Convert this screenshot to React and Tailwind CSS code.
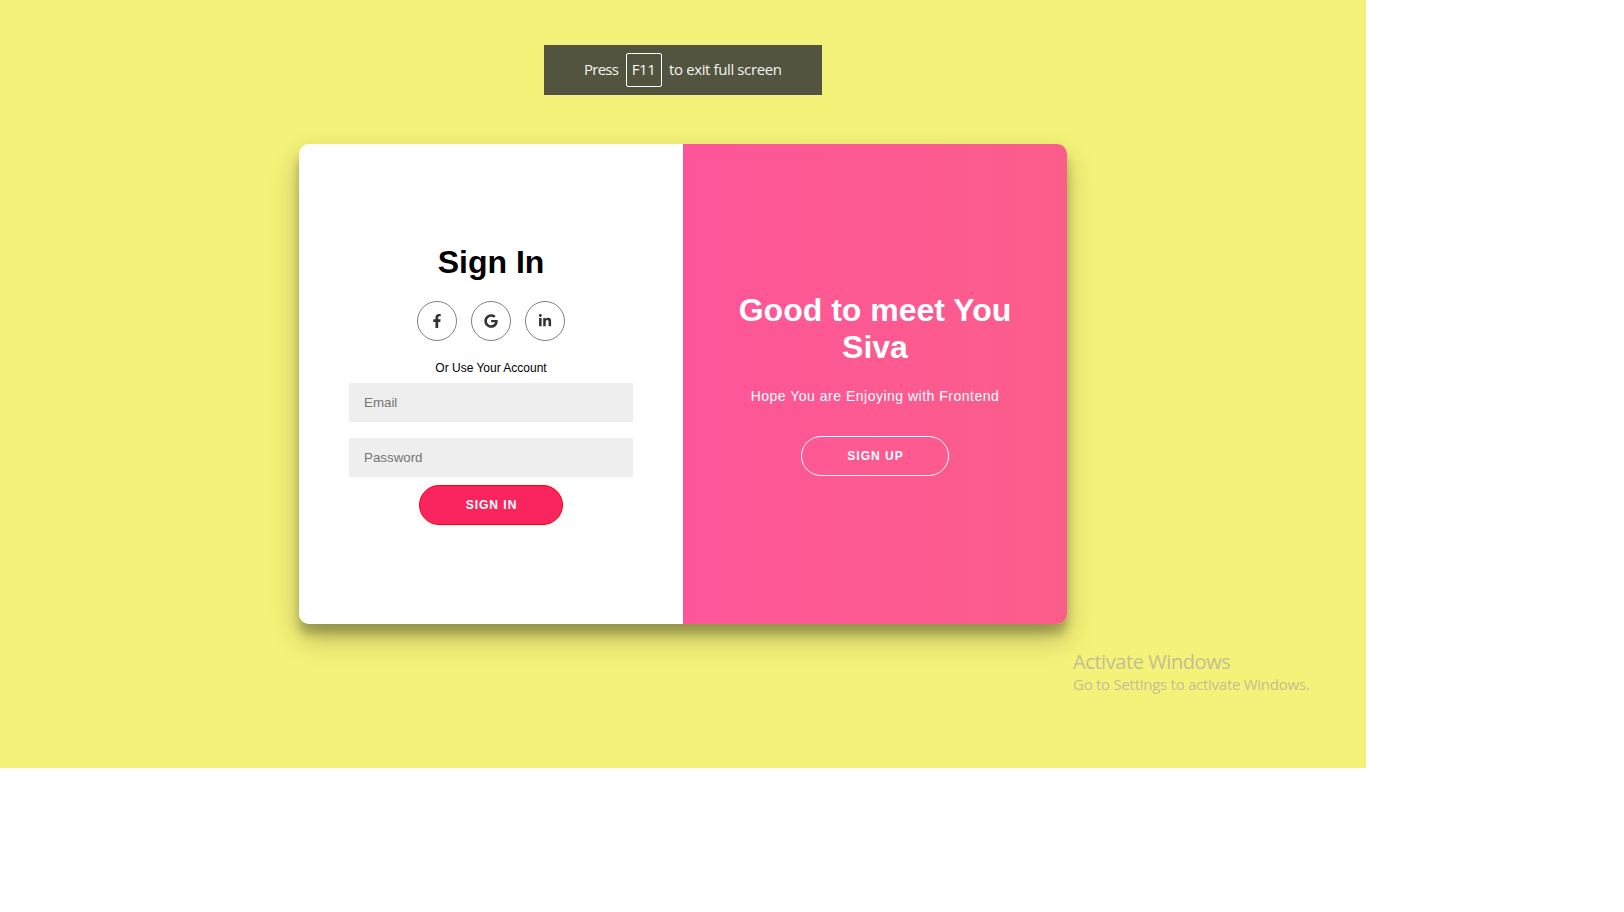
import { FaFacebookF, FaGoogle, FaLinkedinIn } from "react-icons/fa";

const socials = [
  { label: "Facebook", Icon: FaFacebookF },
  { label: "Google", Icon: FaGoogle },
  { label: "LinkedIn", Icon: FaLinkedinIn },
];

function SignInForm() {
  return (
    <form className="flex w-1/2 flex-col items-center justify-center bg-white px-[50px] text-black">
      <h1 className="h-9 pt-px text-[32px] leading-9 font-bold">Sign In</h1>
      <div className="mt-[22px] flex gap-[14px]">
        {socials.map(({ label, Icon }) => (
          <a
            key={label}
            aria-label={label}
            className="flex size-10 items-center justify-center rounded-full border border-[#808080] text-[#333]"
          >
            <Icon className="size-[14px]" />
          </a>
        ))}
      </div>
      <span className="mt-5 text-xs leading-[14px]">Or Use Your Account</span>
      <input
        type="email"
        placeholder="Email"
        className="mt-2 h-[39px] w-full bg-[#eee] px-[15px] text-[13.333px] placeholder:text-[#757575]"
      />
      <input
        type="password"
        placeholder="Password"
        className="mt-4 h-[39px] w-full bg-[#eee] px-[15px] text-[13.333px] placeholder:text-[#757575]"
      />
      <button
        type="button"
        className="mt-2 h-10 w-36 rounded-[20px] border border-[#ff0000] bg-[#fa255e] pl-px text-xs font-bold tracking-[1px] text-white"
      >
        SIGN IN
      </button>
    </form>
  );
}

function Welcome() {
  return (
    <section className="flex w-1/2 flex-col items-center justify-center bg-linear-to-r from-[#fe5599] to-[#fb5d8a] px-10 text-center text-white">
      <h1 className="text-[32px] leading-[37px] font-bold">
        Good to meet You
        <br />
        Siva
      </h1>
      <p className="mt-5 mb-[30px] text-sm leading-5 tracking-[0.5px]">
        Hope You are Enjoying with Frontend
      </p>
      <button
        type="button"
        className="h-10 w-[148px] rounded-[20px] border border-white pl-px text-xs font-bold tracking-[1px]"
      >
        SIGN UP
      </button>
    </section>
  );
}

export default function App() {
  return (
    <div className="h-[912px] w-[1624px] overflow-hidden bg-white font-['Liberation_Sans',sans-serif]">
      <main className="relative flex h-[768px] w-[1366px] items-center justify-center bg-[#f5f279]">
        <div className="flex h-[480px] w-[768px] overflow-hidden rounded-[10px] shadow-[0_14px_28px_rgba(0,0,0,0.25),0_10px_10px_rgba(0,0,0,0.22)]">
          <SignInForm />
          <Welcome />
        </div>

        <div className="absolute top-[45px] left-[544px] flex h-[50px] w-[278px] items-center bg-[#525440] pl-10 font-['Open_Sans',sans-serif] text-[15px] whitespace-nowrap text-[#f4f4f0]">
          <span className="w-[42px] pb-0.5 tracking-[-0.75px]">Press</span>
          <kbd className="flex h-[34px] w-9 items-center justify-center rounded-[2px] border border-white pr-px pb-0.5 font-['Open_Sans',sans-serif] tracking-[-0.4px]">
            F11
          </kbd>
          <span className="ml-[7px] pb-0.5 tracking-[-0.38px]">to exit full screen</span>
        </div>

        <div className="absolute top-[649px] left-[1073px] font-['Open_Sans',sans-serif] whitespace-nowrap text-[#c3bf94]">
          <p className="text-[20px] leading-[26px] tracking-[-0.42px]">Activate Windows</p>
          <p className="text-[15px] leading-[18px] tracking-[-0.27px]">Go to Settings to activate Windows.</p>
        </div>
      </main>
    </div>
  );
}
